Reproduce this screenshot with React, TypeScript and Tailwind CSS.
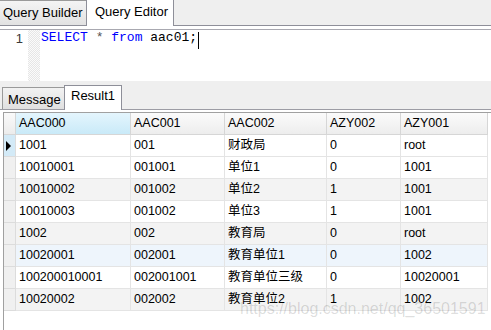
import React from "react";

const columns = [
  { name: "AAC000", w: "w-[115px]" },
  { name: "AAC001", w: "w-[94px]" },
  { name: "AAC002", w: "w-[102px]" },
  { name: "AZY002", w: "w-[74px]" },
  { name: "AZY001", w: "w-[87px]" },
];

const rows = [
  ["1001", "001", "财政局", "0", "root"],
  ["10010001", "001001", "单位1", "0", "1001"],
  ["10010002", "001002", "单位2", "1", "1001"],
  ["10010003", "001002", "单位3", "1", "1001"],
  ["1002", "002", "教育局", "0", "root"],
  ["10020001", "002001", "教育单位1", "0", "1002"],
  ["100200010001", "002001001", "教育单位三级", "0", "10020001"],
  ["10020002", "002002", "教育单位2", "1", "1002"],
];

// row backgrounds: current row, stripes, hovered row
const rowBg = [
  "bg-white",
  "bg-white",
  "bg-[#f3f3f3]",
  "bg-white",
  "bg-[#f3f3f3]",
  "bg-[#eef5fc]",
  "bg-white",
  "bg-[#f3f3f3]",
];

export default function App() {
  return (
    <div className="w-[491px] h-[330px] bg-white overflow-hidden relative font-['Liberation_Sans','Noto_Sans_CJK_SC',sans-serif] text-black">
      {/* Top tabs */}
      <div className="h-[26px] bg-[#efefef] border-b border-[#8e8f99] flex items-end">
        <div className="w-[88px] h-[25px] border-t border-l border-r border-[#9a9a9a] bg-gradient-to-b from-[#f4f4f4] to-[#e2e2e2] text-[13px] leading-[24px] pl-[3px] ml-[-1px]">
          Query Builder
        </div>
        <div className="w-[88px] h-[27px] -mb-px border-t border-l border-r border-[#8e8f99] bg-white text-[13px] leading-[24px] pl-[8px] ml-[-1px] self-start relative -top-px">
          Query Editor
        </div>
      </div>

      {/* Editor */}
      <div className="mt-[3px] h-[52px] border-t border-[#a8a8b0] flex">
        <div className="w-[28px] text-right pr-[5px] text-[13px] leading-[16px] pt-[1px] text-[#3a3a3a]">1</div>
        <div className="w-[12px] bg-[repeating-conic-gradient(#e6e6e6_0_25%,#fbfbfb_0_50%)] bg-[length:2px_2px]" />
        <div className="pl-[1px] font-['Liberation_Mono',monospace] text-[13px] leading-[16px] flex items-start">
          <span className="text-[#0000ff]">SELECT</span>
          <span className="whitespace-pre"> </span>
          <span className="text-[#555]">*</span>
          <span className="whitespace-pre"> </span>
          <span className="text-[#0000ff]">from</span>
          <span className="whitespace-pre"> aac01;</span>
          <span className="inline-block w-px h-[17px] bg-black mt-[2px] ml-[1px]" />
        </div>
      </div>

      {/* Result tabs */}
      <div className="h-[29px] bg-[#efefef] border-b border-[#9c9ca4] flex items-end pl-[2px]">
        <div className="w-[63px] h-[22px] border-t border-l border-r border-[#9a9a9a] bg-gradient-to-b from-[#f2f2f2] to-[#e0e0e0] text-[13px] leading-[23px] pl-[5px]">
          Message
        </div>
        <div className="w-[58px] h-[25px] -mb-px border-t border-l border-r border-[#8e8f99] bg-white text-[13px] leading-[20px] pl-[6px] ml-[-1px]">
          Result1
        </div>
      </div>

      {/* Grid */}
      <div className="mt-[2px] ml-[3px] h-[220px] border-l border-t border-[#a0a0a0] text-[12.5px]">
        <div className="flex w-fit h-[22px]">
          <div className="w-[12px] border-r border-b border-[#d6d6d6] bg-gradient-to-b from-[#fafafa] to-[#ececec]" />
          {columns.map((c, i) => (
            <div
              key={c.name}
              className={`${c.w} border-r border-b border-[#d6d6d6] flex items-center pl-[3px] ${
                i === 0
                  ? "bg-gradient-to-b from-[#e4f5fd] to-[#c9eaf8]"
                  : "bg-gradient-to-b from-[#fbfbfb] to-[#ededed]"
              }`}
            >
              {c.name}
            </div>
          ))}
        </div>
        {rows.map((r, ri) => (
          <div key={ri} className={`flex w-fit h-[22px] ${rowBg[ri]}`}>
            <div
              className={`w-[12px] border-r border-b border-[#dcdcdc] flex items-center ${
                ri === 0 ? "bg-[#d3eaf7]" : "bg-[#f0f0f0]"
              }`}
            >
              {ri === 0 && (
                <svg width="6" height="10" viewBox="0 0 6 10" className="ml-[2px]">
                  <path d="M0 0 L5 5 L0 10 Z" fill="#000" />
                </svg>
              )}
            </div>
            {r.map((v, ci) => (
              <div
                key={ci}
                className={`${columns[ci].w} border-r border-b border-[#e4e4e4] flex items-center pl-[3px] whitespace-nowrap`}
              >
                {v}
              </div>
            ))}
          </div>
        ))}
      </div>

      {/* Watermark */}
      <div className="absolute left-[240px] top-[300px] text-[16px] leading-[18px] text-[rgba(0,0,0,0.14)] font-['Liberation_Sans',sans-serif] whitespace-nowrap pointer-events-none">
        https://blog.csdn.net/qq_36501591
      </div>
    </div>
  );
}
